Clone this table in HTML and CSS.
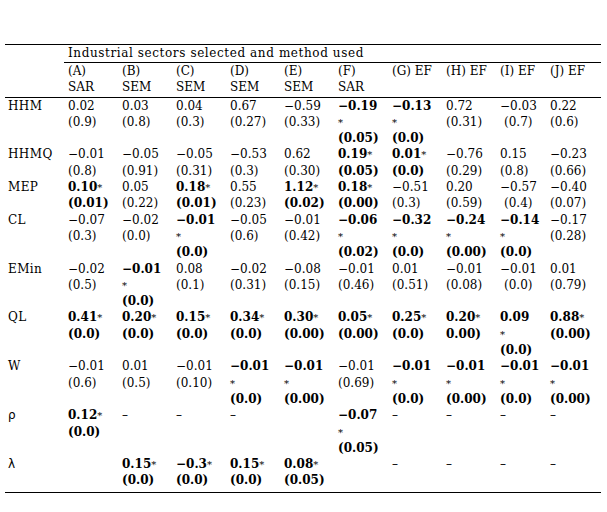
FILE: index.html
```html
<!DOCTYPE html>
<html lang="en">
<head>
<meta charset="utf-8">
<title>Industrial sectors table</title>
<link rel="stylesheet" href="styles.css">
</head>
<body>
<table class="tbl">
  <colgroup>
    <col class="c-lab">
    <col class="c-n"><col class="c-n"><col class="c-n"><col class="c-n"><col class="c-n">
    <col class="c-n"><col class="c-n"><col class="c-n"><col class="c-i"><col class="c-j">
  </colgroup>
  <thead>
    <tr class="h1">
      <td class="lab"></td>
      <td colspan="10" class="span">Industrial sectors selected and method used</td>
    </tr>
    <tr class="h2">
      <td class="lab"></td>
      <td>(A)<br>SAR</td>
      <td>(B)<br>SEM</td>
      <td>(C)<br>SEM</td>
      <td>(D)<br>SEM</td>
      <td>(E)<br>SEM</td>
      <td>(F)<br>SAR</td>
      <td>(G) EF</td>
      <td>(H) EF</td>
      <td>(I) EF</td>
      <td>(J) EF</td>
    </tr>
  </thead>
  <tbody>
    <tr>
      <td class="lab">HHM</td>
      <td>0.02<br>(0.9)</td>
      <td>0.03<br>(0.8)</td>
      <td>0.04<br>(0.3)</td>
      <td>0.67<br>(0.27)</td>
      <td>−0.59<br>(0.33)</td>
      <td class="b">−0.19<br><span class="st">*</span><br>(0.05)</td>
      <td class="b">−0.13<br><span class="st">*</span><br>(0.0)</td>
      <td>0.72<br>(0.31)</td>
      <td>−0.03<br><span class="ind">(0.7)</span></td>
      <td>0.22<br>(0.6)</td>
    </tr>
    <tr>
      <td class="lab">HHMQ</td>
      <td>−0.01<br>(0.8)</td>
      <td>−0.05<br>(0.91)</td>
      <td>−0.05<br>(0.31)</td>
      <td>−0.53<br>(0.3)</td>
      <td>0.62<br>(0.30)</td>
      <td class="b">0.19<span class="st">*</span><br>(0.05)</td>
      <td class="b">0.01<span class="st">*</span><br>(0.0)</td>
      <td>−0.76<br>(0.29)</td>
      <td>0.15<br>(0.8)</td>
      <td>−0.23<br>(0.66)</td>
    </tr>
    <tr>
      <td class="lab">MEP</td>
      <td class="b">0.10<span class="st">*</span><br>(0.01)</td>
      <td>0.05<br>(0.22)</td>
      <td class="b">0.18<span class="st">*</span><br>(0.01)</td>
      <td>0.55<br>(0.23)</td>
      <td class="b">1.12<span class="st">*</span><br>(0.02)</td>
      <td class="b">0.18<span class="st">*</span><br>(0.00)</td>
      <td>−0.51<br>(0.3)</td>
      <td>0.20<br>(0.59)</td>
      <td>−0.57<br><span class="ind">(0.4)</span></td>
      <td>−0.40<br>(0.07)</td>
    </tr>
    <tr>
      <td class="lab">CL</td>
      <td>−0.07<br>(0.3)</td>
      <td>−0.02<br>(0.0)</td>
      <td class="b">−0.01<br><span class="st">*</span><br>(0.0)</td>
      <td>−0.05<br>(0.6)</td>
      <td>−0.01<br>(0.42)</td>
      <td class="b">−0.06<br><span class="st">*</span><br>(0.02)</td>
      <td class="b">−0.32<br><span class="st">*</span><br>(0.0)</td>
      <td class="b">−0.24<br><span class="st">*</span><br>(0.00)</td>
      <td class="b">−0.14<br><span class="st">*</span><br>(0.0)</td>
      <td>−0.17<br>(0.28)</td>
    </tr>
    <tr>
      <td class="lab">EMin</td>
      <td>−0.02<br>(0.5)</td>
      <td class="b">−0.01<br><span class="st">*</span><br>(0.0)</td>
      <td>0.08<br>(0.1)</td>
      <td>−0.02<br>(0.31)</td>
      <td>−0.08<br>(0.15)</td>
      <td>−0.01<br>(0.46)</td>
      <td>0.01<br>(0.51)</td>
      <td>−0.01<br>(0.08)</td>
      <td>−0.01<br><span class="ind">(0.0)</span></td>
      <td>0.01<br>(0.79)</td>
    </tr>
    <tr>
      <td class="lab">QL</td>
      <td class="b">0.41<span class="st">*</span><br>(0.0)</td>
      <td class="b">0.20<span class="st">*</span><br>(0.0)</td>
      <td class="b">0.15<span class="st">*</span><br>(0.0)</td>
      <td class="b">0.34<span class="st">*</span><br>(0.0)</td>
      <td class="b">0.30<span class="st">*</span><br>(0.00)</td>
      <td class="b">0.05<span class="st">*</span><br>(0.00)</td>
      <td class="b">0.25<span class="st">*</span><br>(0.0)</td>
      <td class="b">0.20<span class="st">*</span><br>0.00)</td>
      <td class="b">0.09<br><span class="st">*</span><br>(0.0)</td>
      <td class="b">0.88<span class="st">*</span><br>(0.00)</td>
    </tr>
    <tr>
      <td class="lab">W</td>
      <td>−0.01<br>(0.6)</td>
      <td>0.01<br>(0.5)</td>
      <td>−0.01<br>(0.10)</td>
      <td class="b">−0.01<br><span class="st">*</span><br>(0.0)</td>
      <td class="b">−0.01<br><span class="st">*</span><br>(0.00)</td>
      <td>−0.01<br>(0.69)</td>
      <td class="b">−0.01<br><span class="st">*</span><br>(0.0)</td>
      <td class="b">−0.01<br><span class="st">*</span><br>(0.00)</td>
      <td class="b">−0.01<br><span class="st">*</span><br>(0.0)</td>
      <td class="b">−0.01<br><span class="st">*</span><br>(0.00)</td>
    </tr>
    <tr>
      <td class="lab greek">ρ</td>
      <td class="b">0.12<span class="st">*</span><br>(0.0)</td>
      <td>–</td>
      <td>–</td>
      <td>–</td>
      <td></td>
      <td class="b">−0.07<br><span class="st">*</span><br>(0.05)</td>
      <td>–</td>
      <td>–</td>
      <td>–</td>
      <td>–</td>
    </tr>
    <tr class="last">
      <td class="lab greek">λ</td>
      <td></td>
      <td class="b">0.15<span class="st">*</span><br>(0.0)</td>
      <td class="b">−0.3<span class="st">*</span><br>(0.0)</td>
      <td class="b">0.15<span class="st">*</span><br>(0.0)</td>
      <td class="b">0.08<span class="st">*</span><br>(0.05)</td>
      <td></td>
      <td>–</td>
      <td>–</td>
      <td>–</td>
      <td>–</td>
    </tr>
  </tbody>
</table>
</body>
</html>
```
FILE: styles.css
```css
html, body {
  margin: 0;
  padding: 0;
  background: #ffffff;
}

.tbl {
  border-collapse: collapse;
  table-layout: fixed;
  width: 596px;
  margin: 44px 0 0 5px;
  font-family: "DejaVu Serif", "Liberation Serif", serif;
  font-size: 12px;
  line-height: 16.3px;
  color: #000000;
  border-top: 1px solid #000000;
  border-bottom: 1px solid #000000;
}

.c-lab { width: 59px; }
.c-n { width: 54px; }
.c-i { width: 50px; }
.c-j { width: 55px; }

.tbl td {
  padding: 0 0 0 4px;
  vertical-align: top;
  white-space: nowrap;
  text-align: left;
}

.tbl td.lab {
  padding-left: 3px;
  letter-spacing: 0.4px;
}

.h1 td {
  height: 17px;
}

.h1 .span {
  border-bottom: 1px solid #000000;
  letter-spacing: 0.6px;
}

.h2 td {
  border-bottom: 1px solid #000000;
  padding-bottom: 1px;
}

.last td {
  padding-bottom: 3px;
}

.b {
  font-weight: bold;
}

.st {
  font-weight: normal;
  font-size: 10px;
  line-height: 0;
}

.ind {
  padding-left: 4px;
}

.greek {
  font-family: "DejaVu Sans", sans-serif;
}
```
